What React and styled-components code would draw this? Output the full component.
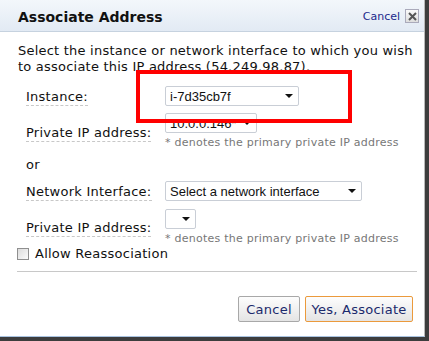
import React from 'react';
import styled, { createGlobalStyle } from 'styled-components';

const GlobalStyle = createGlobalStyle`
  html, body {
    margin: 0;
    padding: 0;
    background: #3d3d3d;
  }
  body {
    font-family: "DejaVu Sans", Verdana, sans-serif;
  }
`;

const Dialog = styled.div`
  position: relative;
  width: 425px;
  height: 337px;
  background: #fff;
  border-right: 1px solid #b9b9b9;
  border-bottom: 1px solid #a9c3e0;
  box-sizing: border-box;
  display: flex;
  flex-direction: column;
`;

const Header = styled.div`
  height: 32px;
  box-sizing: border-box;
  border-bottom: 1px solid #c6d2df;
  background: linear-gradient(#f3f7fb, #e2eaf4);
  display: flex;
  align-items: center;
  justify-content: space-between;
  padding: 3px 5px 0 18px;
`;

const Title = styled.h1`
  margin: 0;
  font-size: 14px;
  font-weight: bold;
  color: #111;
`;

const CloseArea = styled.div`
  display: flex;
  align-items: center;
  gap: 5px;
  margin-top: -2px;
`;

const CancelLink = styled.a`
  font-size: 11px;
  color: #1b2a8c;
  text-decoration: none;
`;

const CloseBox = styled.span`
  width: 12px;
  height: 12px;
  border: 1px solid #aab;
  background: linear-gradient(#fafafa, #dedede);
  display: flex;
  align-items: center;
  justify-content: center;
`;

const Body = styled.div`
  padding: 11px 11px 0 18px;
  font-size: 13px;
  color: #111;
  letter-spacing: 0.25px;
`;

const Intro = styled.p`
  margin: 0 -8px 11px 0;
  line-height: 16px;
  letter-spacing: 0.22px;
`;

const FieldRow = styled.div`
  display: flex;
  align-items: flex-start;
  padding-left: 8px;
  margin-top: ${(p) => p.top || 0}px;
`;

const Label = styled.span`
  width: 139px;
  flex: none;
  line-height: 15px;
  padding-top: ${(p) => p.drop || 3}px;
`;

const LabelText = styled.span`
  border-bottom: 1px dashed #c8c8c8;
  padding-bottom: 1px;
`;

const Control = styled.div`
  display: flex;
  flex-direction: column;
`;

const Select = styled.div`
  width: ${(p) => p.w}px;
  height: 20px;
  box-sizing: border-box;
  border: 1px solid #c9ced6;
  border-radius: 2px;
  background: #fff;
  display: flex;
  align-items: center;
  justify-content: space-between;
  padding: 0 5px 0 4px;
  font-family: "Liberation Sans", Arial, sans-serif;
  font-size: 13px;
  letter-spacing: 0;
  color: #111;
  white-space: nowrap;
`;

const Arrow = styled.span`
  flex: none;
  width: 0;
  height: 0;
  border-left: 4px solid transparent;
  border-right: 4px solid transparent;
  border-top: 4px solid #111;
`;

const Hint = styled.span`
  font-size: 11px;
  line-height: 13px;
  color: #777;
  margin-top: 3px;
`;

const OrText = styled.div`
  padding-left: 8px;
  margin-top: 8px;
  line-height: 16px;
`;

const CheckRow = styled.label`
  display: flex;
  align-items: center;
  gap: 6px;
  margin-top: 1px;
  margin-left: -1px;
  line-height: 16px;
`;

const Box = styled.span`
  width: 10px;
  height: 10px;
  border: 1px solid #8f8f8f;
  background: linear-gradient(135deg, #dcdcdc, #fbfbfb);
`;

const Divider = styled.hr`
  margin: 9px 0 0 -1px;
  border: none;
  border-top: 1px solid #c8c8c8;
  width: 400px;
`;

const Footer = styled.div`
  display: flex;
  justify-content: flex-end;
  gap: 5px;
  padding-top: 24px;
`;

const Button = styled.button`
  width: ${(p) => p.w}px;
  height: 26px;
  padding: 0;
  font-family: "DejaVu Sans", Verdana, sans-serif;
  font-size: 13px;
  letter-spacing: 0.25px;
  color: #1b2a6c;
  border: 1px solid ${(p) => (p.primary ? '#eb9a3c' : '#a8a8a8')};
  border-radius: 2px;
  background: linear-gradient(#fdfdfd, #e4e4e4);
`;

const Highlight = styled.div`
  position: absolute;
  left: 136px;
  top: 70px;
  width: 216px;
  height: 53px;
  box-sizing: border-box;
  border: 4px solid #ff0000;
  pointer-events: none;
`;

function Dropdown({ w, value }) {
  return (
    <Select w={w}>
      <span>{value}</span>
      <Arrow />
    </Select>
  );
}

export default function App() {
  return (
    <>
      <GlobalStyle />
      <Dialog>
        <Header>
          <Title>Associate Address</Title>
          <CloseArea>
            <CancelLink href="#">Cancel</CancelLink>
            <CloseBox>
              <svg width="9" height="9" viewBox="0 0 9 9">
                <path d="M1 1L8 8M8 1L1 8" stroke="#555" strokeWidth="2" />
              </svg>
            </CloseBox>
          </CloseArea>
        </Header>
        <Body>
          <Intro>
            Select the instance or network interface to which you wish to associate this IP address
            (54.249.98.87).
          </Intro>
          <FieldRow>
            <Label drop={3}>
              <LabelText>Instance:</LabelText>
            </Label>
            <Dropdown w={134} value="i-7d35cb7f" />
          </FieldRow>
          <FieldRow top={7}>
            <Label drop={12}>
              <LabelText>Private IP address:</LabelText>
            </Label>
            <Control>
              <Dropdown w={92} value="10.0.0.146*" />
              <Hint>* denotes the primary private IP address</Hint>
            </Control>
          </FieldRow>
          <OrText>or</OrText>
          <FieldRow top={8}>
            <Label drop={3}>
              <LabelText>Network Interface:</LabelText>
            </Label>
            <Dropdown w={197} value="Select a network interface" />
          </FieldRow>
          <FieldRow top={8}>
            <Label drop={11}>
              <LabelText>Private IP address:</LabelText>
            </Label>
            <Control>
              <Dropdown w={31} value="" />
              <Hint>* denotes the primary private IP address</Hint>
            </Control>
          </FieldRow>
          <CheckRow>
            <Box />
            <span>Allow Reassociation</span>
          </CheckRow>
          <Divider />
          <Footer>
            <Button w={62}>Cancel</Button>
            <Button w={108} primary>
              Yes, Associate
            </Button>
          </Footer>
        </Body>
        <Highlight />
      </Dialog>
    </>
  );
}
